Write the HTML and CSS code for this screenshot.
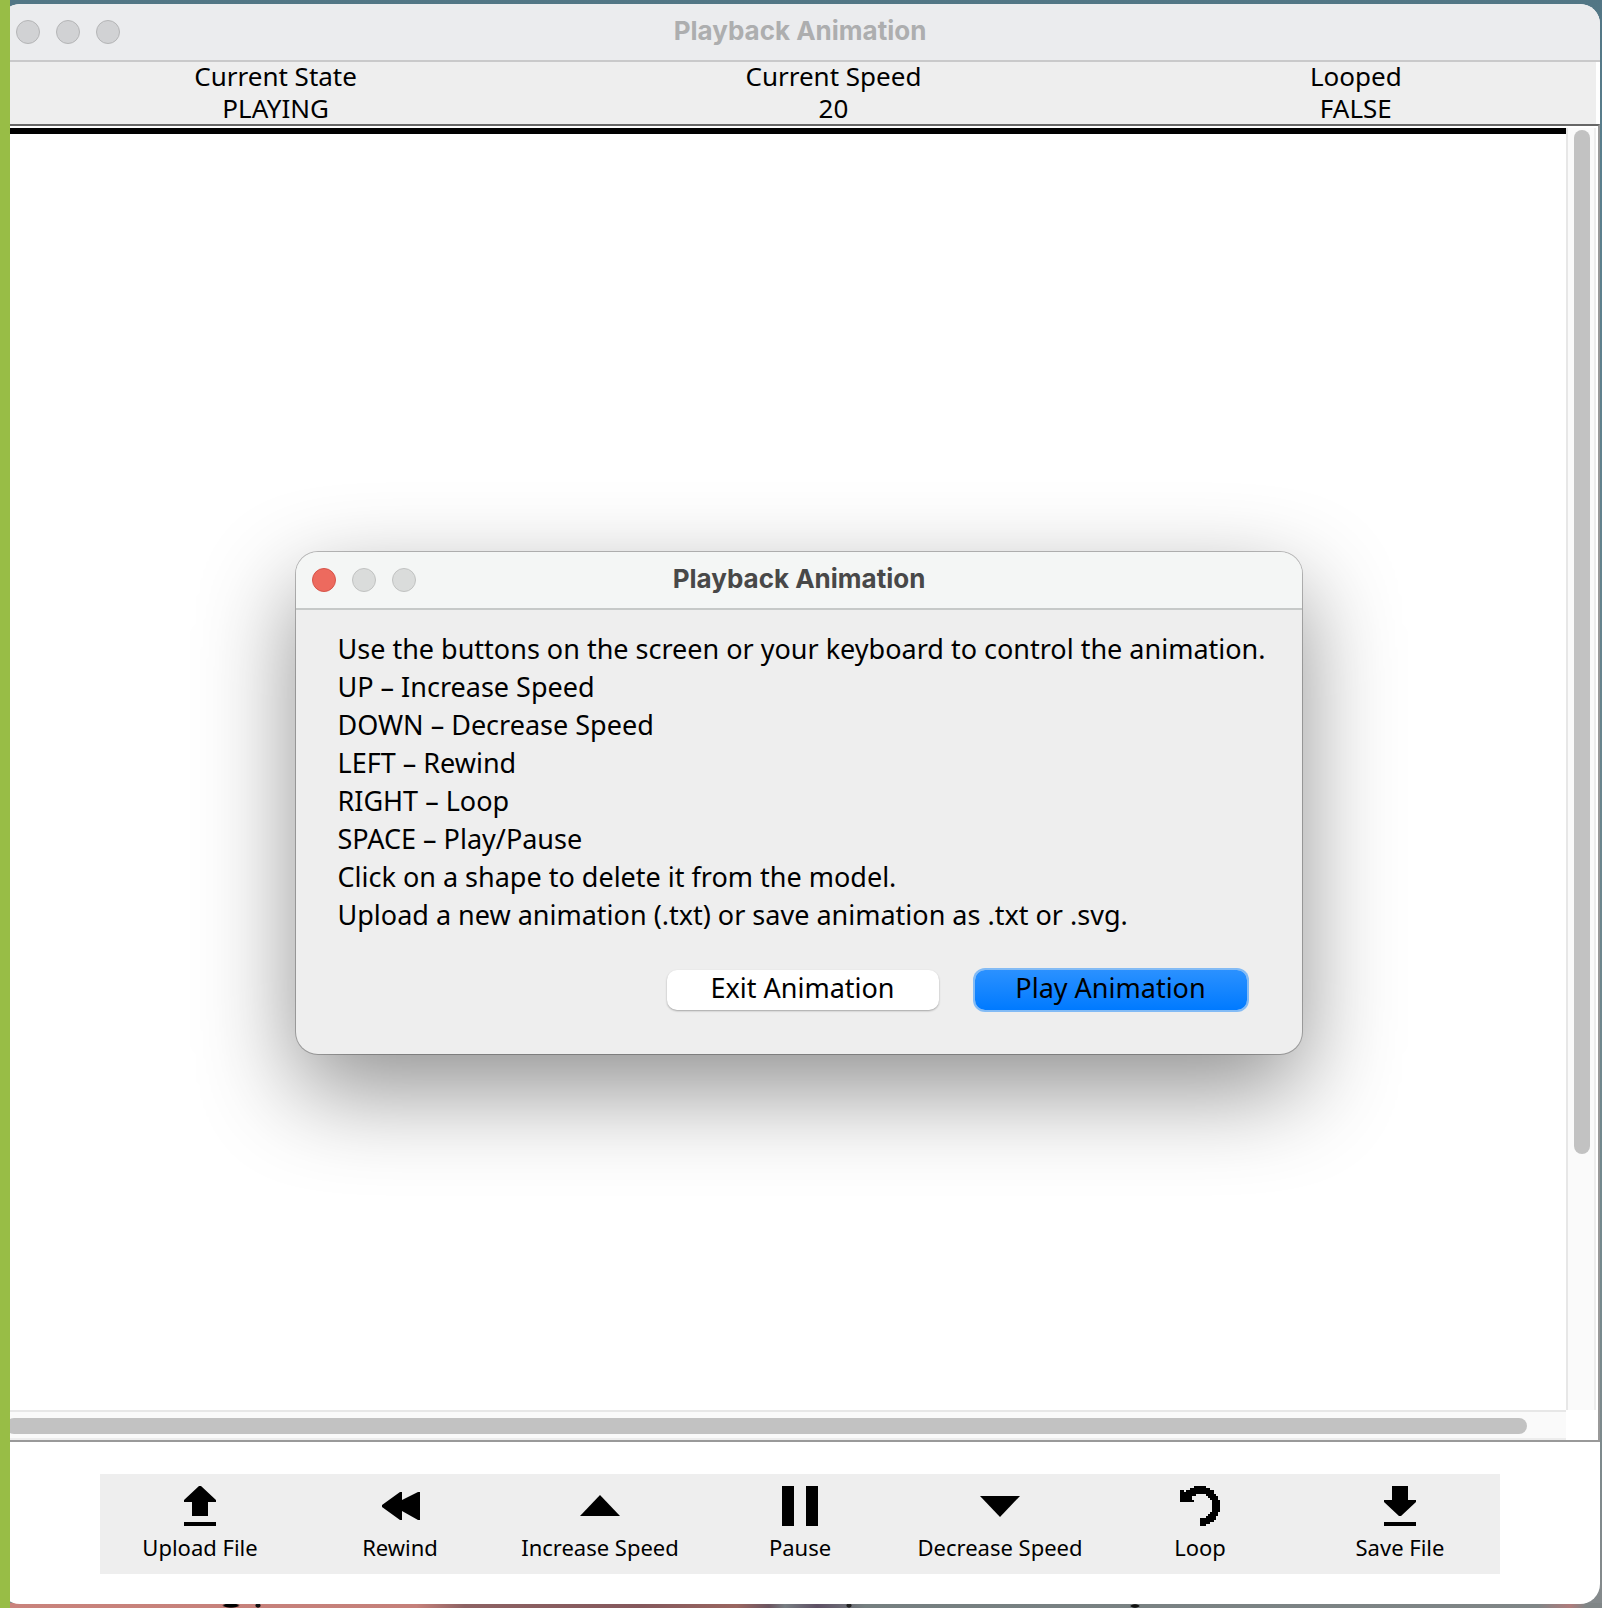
FILE: index.html
```html
<!DOCTYPE html>
<html lang="en">
<head>
<meta charset="utf-8">
<title>Playback Animation</title>
<link rel="stylesheet" href="styles.css">
</head>
<body>
<div class="desktop">
  <main class="window">
    <header class="titlebar">
      <div class="lights"><i class="light"></i><i class="light"></i><i class="light"></i></div>
      <h1 class="title">Playback Animation</h1>
    </header>
    <section class="status">
      <div class="stat"><span>Current State</span><span>PLAYING</span></div>
      <div class="stat"><span>Current Speed</span><span>20</span></div>
      <div class="stat"><span>Looped</span><span>FALSE</span></div>
    </section>
    <section class="viewport">
      <div class="canvas"></div>
      <div class="track track-y"><div class="thumb thumb-y"></div></div>
      <div class="track track-x"><div class="thumb thumb-x"></div></div>
    </section>
    <footer class="footer">
      <nav class="toolbar" aria-label="Playback">
        <button class="tool" type="button">
          <svg class="icon" viewBox="0 0 40 40"><path d="M19 0H21L36 14V16H28V30H12V16H4V14ZM4 36H36V40H4Z"/></svg>
          <span>Upload File</span>
        </button>
        <button class="tool" type="button">
          <svg class="icon" viewBox="0 0 40 40"><path d="M2 19L20 6H22V14L38 6H40V34H38L22 25V34H20L2 21Z"/></svg>
          <span>Rewind</span>
        </button>
        <button class="tool" type="button">
          <svg class="icon" viewBox="0 0 40 40"><path d="M20 9L40 30H0Z"/></svg>
          <span>Increase Speed</span>
        </button>
        <button class="tool" type="button">
          <svg class="icon" viewBox="0 0 40 40"><path d="M2 0H14V40H2ZM26 0H38V40H26Z"/></svg>
          <span>Pause</span>
        </button>
        <button class="tool" type="button">
          <svg class="icon" viewBox="0 0 40 40"><path d="M0 10H40L20 31Z"/></svg>
          <span>Decrease Speed</span>
        </button>
        <button class="tool" type="button">
          <svg class="icon" viewBox="0 0 40 40"><path d="M0 4H4V6H6V4H10V2H14V0H26V2H30V4H34V8H36V10H38V14H40V26H38V30H36V34H34V36H30V38H26V40H20V32H26V30H28V28H30V26H32V14H30V12H28V10H26V8H16V10H12V14H14V16H0Z"/></svg>
          <span>Loop</span>
        </button>
        <button class="tool" type="button">
          <svg class="icon" viewBox="0 0 40 40"><path d="M12 0H28V14H36V16L21 30H19L4 16V14H12ZM4 36H36V40H4Z"/></svg>
          <span>Save File</span>
        </button>
      </nav>
    </footer>
  </main>
  <div class="edge"></div>
  <div class="overlay">
    <section class="dialog" role="dialog" aria-labelledby="dialog-title">
      <header class="titlebar titlebar-active">
        <div class="lights"><i class="light light-close"></i><i class="light"></i><i class="light"></i></div>
        <h2 class="title" id="dialog-title">Playback Animation</h2>
      </header>
      <div class="message">
        <p>Use the buttons on the screen or your keyboard to control the animation.</p>
        <p>UP – Increase Speed</p>
        <p>DOWN – Decrease Speed</p>
        <p>LEFT – Rewind</p>
        <p>RIGHT – Loop</p>
        <p>SPACE – Play/Pause</p>
        <p>Click on a shape to delete it from the model.</p>
        <p>Upload a new animation (.txt) or save animation as .txt or .svg.</p>
      </div>
      <div class="actions">
        <button class="btn" type="button">Exit Animation</button>
        <button class="btn btn-primary" type="button">Play Animation</button>
      </div>
    </section>
  </div>
</div>
</body>
</html>
```
FILE: styles.css
```css
* { box-sizing: border-box; }

body {
  margin: 0;
  font-family: "Noto Sans", "Open Sans", sans-serif;
  font-size: 26px;
  color: #000;
}

p, h1, h2 { margin: 0; }

button {
  font: inherit;
  color: inherit;
  border: 0;
  padding: 0;
}

.desktop {
  position: relative;
  display: flex;
  min-height: 100vh;
  padding: 4px 2px 4px 0;
  background:
    radial-gradient(closest-side, #000 70%, transparent) 14% 100% / 18px 5px no-repeat,
    radial-gradient(closest-side, #111 70%, transparent) 16% 100% / 6px 5px no-repeat,
    radial-gradient(closest-side, #222 70%, transparent) 53% 100% / 6px 5px no-repeat,
    radial-gradient(closest-side, #111 70%, transparent) 71% 100% / 10px 4px no-repeat,
    linear-gradient(90deg, #c9837c 0%, #c5807a 26%, #8d6263 29%, #85585c 40%, #9a6660 46%, #6b5560 48%, #777d82 49%, #5d5064 51%, #757f80 54%, #808687 96%, #b07c7c 98%, #808687 99%) bottom / 100% 5px no-repeat,
    linear-gradient(#527685, #5a7f8d 10%, #75898d 80%, #858a8c);
}

.window {
  flex: 1;
  display: flex;
  flex-direction: column;
  isolation: isolate;
  overflow: hidden;
  border-radius: 20px;
  background: #fff;
}

.edge {
  position: absolute;
  inset: 0 auto 0 0;
  width: 10px;
  background: #98bd46;
}

.titlebar {
  position: relative;
  z-index: 1;
  display: grid;
  grid-template-columns: 1fr auto 1fr;
  align-items: center;
  height: 58px;
  padding: 0 16px;
  border-bottom: 2px solid #c9c9ca;
  background: #ebecee;
  color: #adaeaf;
}

.titlebar-active {
  border-color: #c6c9c8;
  background: #f4f6f5;
  color: #484848;
}

.title {
  padding-bottom: 2px;
  font: 700 26px/32px Inter, "Liberation Sans", sans-serif;
}

.lights {
  display: flex;
  gap: 16px;
}

.light {
  width: 24px;
  height: 24px;
  border: 1px solid #b4b5b6;
  border-radius: 50%;
  background: #d1d2d4;
}

.titlebar-active .light {
  border-color: #c0c2c1;
  background: #dadcdb;
}

.titlebar-active .light-close {
  border-color: #d65449;
  background: #ed6a5e;
}

.status {
  display: flex;
  justify-content: space-around;
  margin: -2px 4px 0 0;
  background: #eee;
  line-height: 32px;
}

.stat {
  display: flex;
  flex-direction: column;
  align-items: center;
}

.viewport {
  flex: 1;
  display: grid;
  grid-template-columns: 1fr 30px;
  grid-template-rows: 1fr 30px;
  padding: 2px 2px 0 0;
  border: solid #666;
  border-width: 2px 2px 2px 0;
  border-right-color: #999;
  border-bottom-color: #999;
}

.canvas { border-top: 6px solid #000; }

.track { background: #fafafa; }

.track-y {
  padding: 2px 4px 0 6px;
  border-left: 2px solid #e7e7e7;
  border-right: 2px solid #ededed;
}

.track-x {
  padding: 6px 0 4px 6px;
  border-top: 2px solid #e7e7e7;
  border-bottom: 2px solid #ededed;
}

.thumb {
  border-radius: 8px;
  background: #c2c2c2;
}

.thumb-y { height: 80%; }

.thumb-x {
  width: 97.5%;
  height: 16px;
}

.footer { padding: 32px 100px 30px; }

.toolbar {
  display: grid;
  grid-template-columns: repeat(7, 1fr);
  background: #eee;
}

.tool {
  display: flex;
  flex-direction: column;
  align-items: center;
  gap: 6px;
  padding: 12px 0;
  background: none;
  font-size: 22px;
  line-height: 30px;
}

.icon {
  width: 40px;
  height: 40px;
}

.overlay {
  position: absolute;
  inset: 0;
  display: flex;
  align-items: center;
  justify-content: center;
  padding: 0 4px 2px 0;
}

.dialog {
  overflow: hidden;
  border-radius: 22px;
  background: #eee;
  box-shadow: 0 0 0 1px #00000040, 0 36px 96px #00000070;
  font-size: 27px;
}

.message {
  padding: 20px 36px 0 41px;
  line-height: 38px;
}

.actions {
  display: flex;
  justify-content: flex-end;
  gap: 36px;
  padding: 36px 55px 44px;
}

.btn {
  width: 272px;
  height: 40px;
  padding-bottom: 4px;
  border-radius: 10px;
  background: #fff;
  line-height: 36px;
  box-shadow: 0 1px 2px #00000050;
}

.btn-primary {
  background: linear-gradient(#2b91ff, #007aff);
  box-shadow: 0 0 0 2px #83bbf5;
}
```
